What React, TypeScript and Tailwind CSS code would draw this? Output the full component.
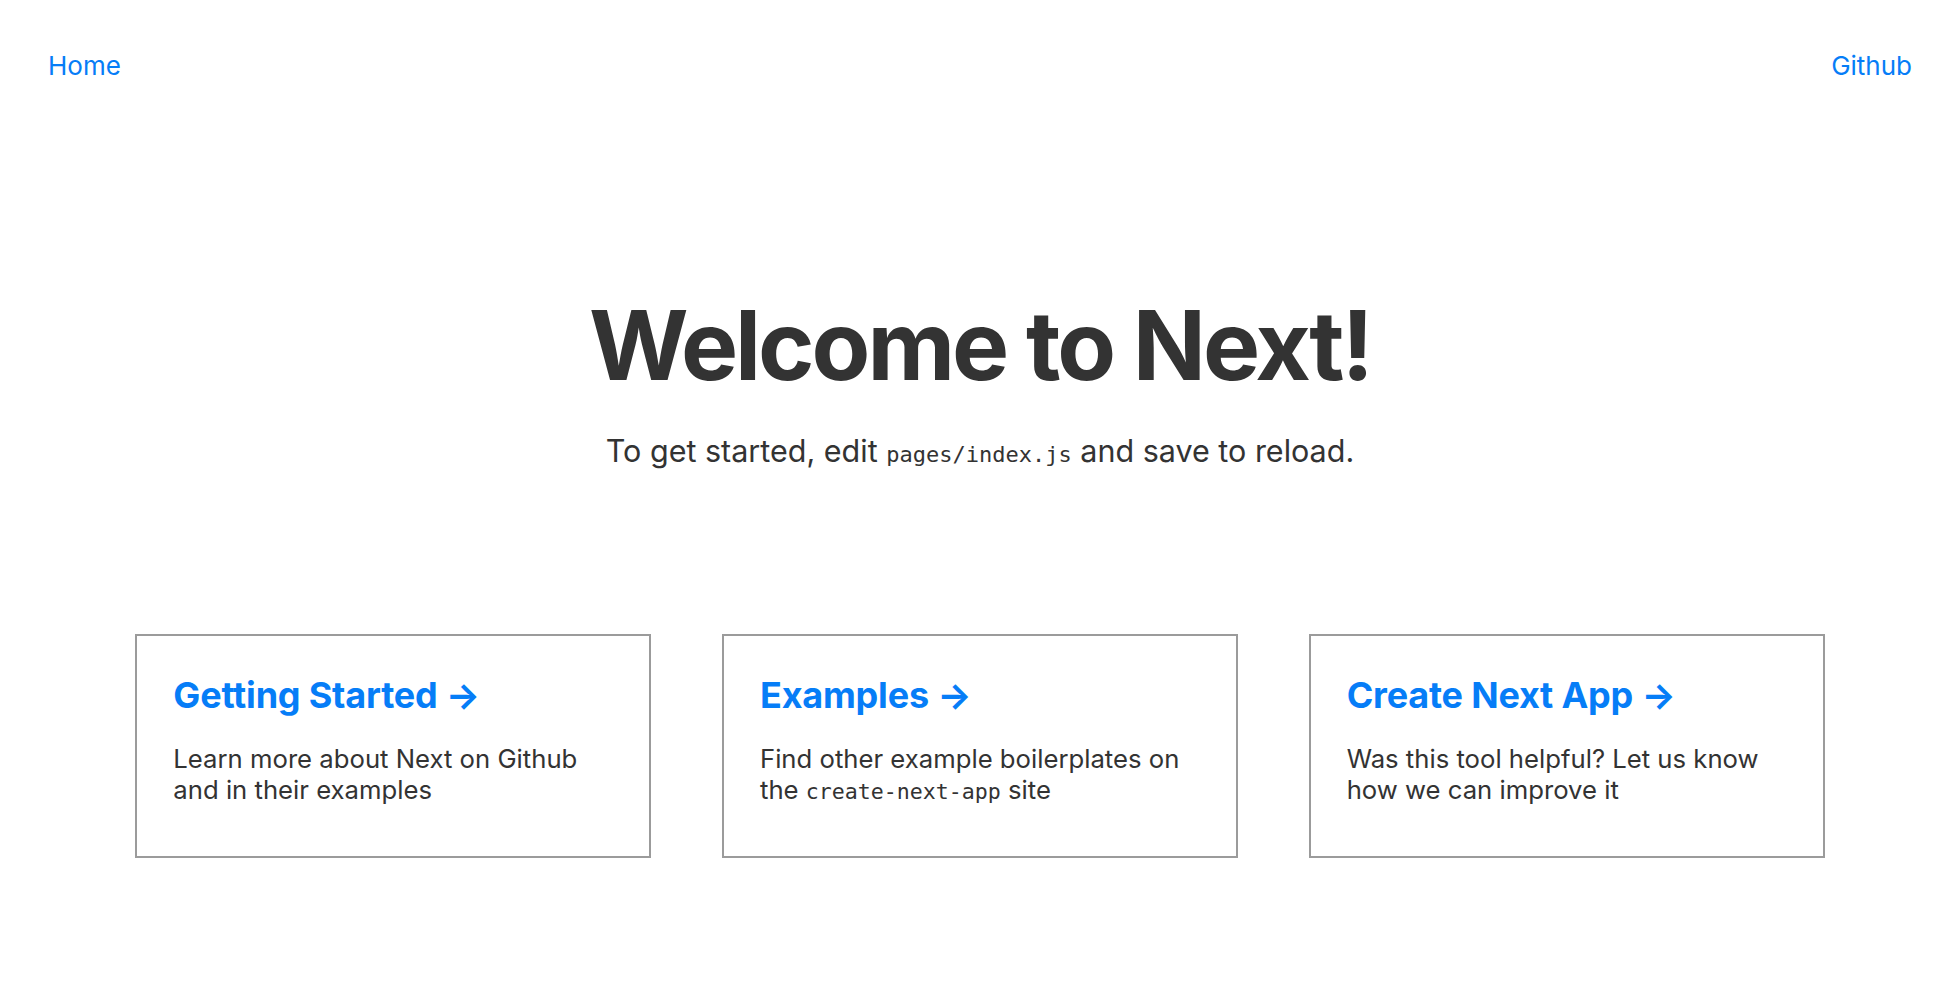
import React from 'react';

const cards = [
  {
    title: 'Getting Started',
    body: <>Learn more about Next on Github and in their examples</>,
  },
  {
    title: 'Examples',
    body: (
      <>
        Find other example boilerplates on the{' '}
        <code className="font-['DejaVu_Sans_Mono',monospace] text-[21.6px]">create-next-app</code> site
      </>
    ),
  },
  {
    title: 'Create Next App',
    body: <>Was this tool helpful? Let us know how we can improve it</>,
  },
];

export default function App() {
  return (
    <div className="min-h-screen w-full bg-white font-['Inter',sans-serif] text-[#333]">
      <nav className="text-center">
        <ul className="mt-8 flex justify-between px-8 py-2">
          <li className="flex px-4 py-3">
            <a href="#" className="text-[26px] leading-[28px] text-[#067df7]">Home</a>
          </li>
          <li className="flex px-4 py-3">
            <a href="#" className="text-[26px] leading-[28px] text-[#067df7]">Github</a>
          </li>
        </ul>
      </nav>

      <div className="w-full">
        <h1 className="pt-[190px] text-center text-[96px] font-bold leading-[1.15] tracking-[-3px]">
          Welcome to Next!
        </h1>
        <p className="mt-8 text-center text-[30.5px] leading-[37px]">
          To get started, edit{' '}
          <code className="font-['DejaVu_Sans_Mono',monospace] text-[22px]">pages/index.js</code> and save to
          reload.
        </p>

        <div className="mx-auto mt-[161px] flex max-w-[1760px] justify-around">
          {cards.map((c) => (
            <a
              key={c.title}
              href="#"
              className="w-[516px] border-2 border-[#9b9b9b] px-[36px] pb-[49px] pt-[37px] text-left"
            >
              <h3 className="text-[36px] font-bold leading-[44px] tracking-[-0.2px] text-[#067df7]">
                {c.title} →
              </h3>
              <p className="pt-[26px] text-[25.7px] leading-[31px] text-[#333]">{c.body}</p>
            </a>
          ))}
        </div>
      </div>
    </div>
  );
}
